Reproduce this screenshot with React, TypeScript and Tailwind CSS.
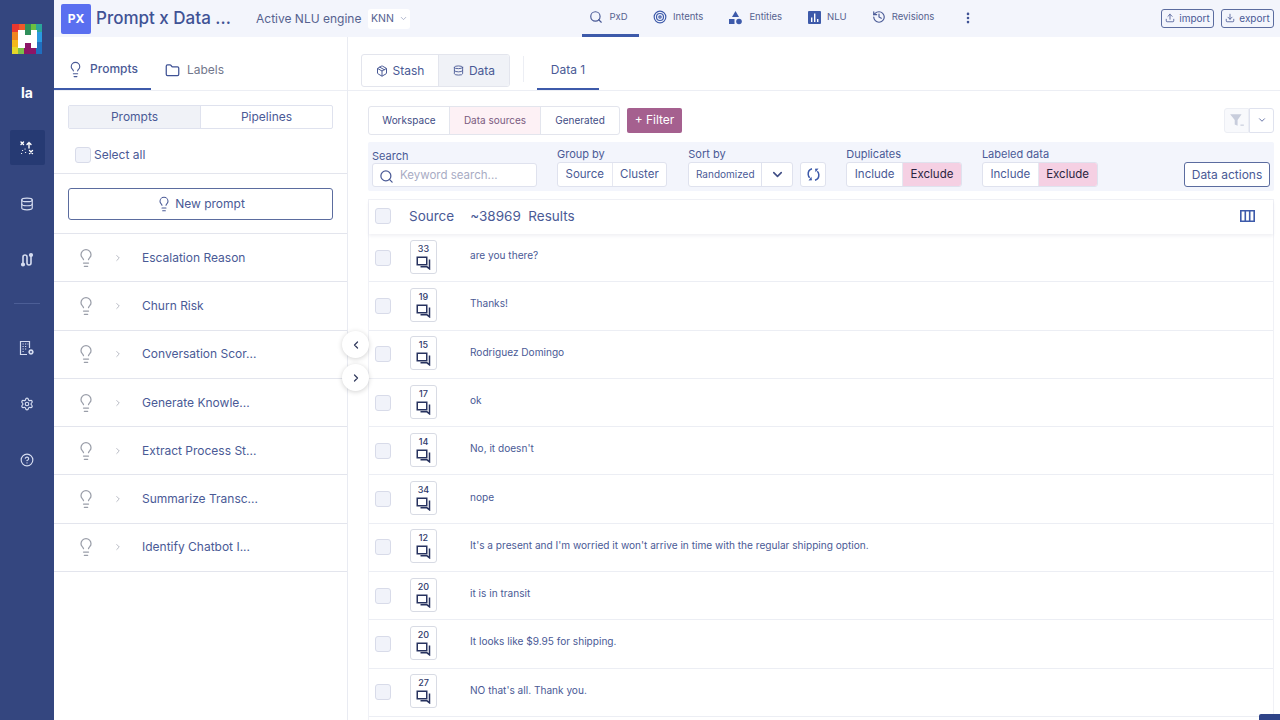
import { ChevronDown, ChevronLeft, ChevronRight, CircleHelp, Database, Download, EllipsisVertical, Folder, History, Lightbulb, Package, Search, Settings, Target, Upload } from "lucide-react"

const prompts = ["Escalation Reason", "Churn Risk", "Conversation Scor...", "Generate Knowle...", "Extract Process St...", "Summarize Transc...", "Identify Chatbot I..."]

const rows = [
  { n: 33, text: "are you there?" },
  { n: 19, text: "Thanks!" },
  { n: 15, text: "Rodriguez Domingo" },
  { n: 17, text: "ok" },
  { n: 14, text: "No, it doesn't" },
  { n: 34, text: "nope" },
  { n: 12, text: "It's a present and I'm worried it won't arrive in time with the regular shipping option." },
  { n: 20, text: "it is in transit" },
  { n: 20, text: "It looks like $9.95 for shipping." },
  { n: 27, text: "NO that's all. Thank you." },
]

function Logo() {
  return (
    <svg width="30" height="30" viewBox="0 0 30 30" shapeRendering="crispEdges">
      <rect width="30" height="30" fill="#3f9c6a" />
      <rect width="7" height="8" fill="#e8372f" />
      <rect x="7" width="6" height="6" fill="#ef5a2a" />
      <rect x="13" width="6" height="11" fill="#2f8f5a" />
      <rect x="19" width="5" height="6" fill="#6cbf3f" />
      <rect x="24" width="6" height="8" fill="#2aa59a" />
      <rect y="8" width="6" height="8" fill="#f0851f" />
      <rect y="16" width="6" height="7" fill="#f2b81c" />
      <rect y="23" width="6" height="7" fill="#e4d82a" />
      <rect x="6" y="24" width="6" height="6" fill="#7cc04a" />
      <rect x="12" y="19" width="12" height="11" fill="#8c1566" />
      <rect x="24" y="8" width="6" height="10" fill="#2a9ae0" />
      <rect x="24" y="18" width="6" height="12" fill="#1f6fc0" />
      <path d="M6 6h7v5h6V6h6v18h-6v-5h-6v5H6z" fill="#fff" />
    </svg>
  )
}

function JourneyIcon() {
  return (
    <svg width="14" height="14" viewBox="0 0 14 14" fill="none" stroke="#fff" strokeWidth="1.4" strokeLinecap="round">
      <path d="M1 1l2.500 2.500M3.500 1L1 3.500M9 1.500v5.500M7 3.500L9 1.500l2 2M9.500 9.500l3 3M12.500 9.500l-3 3" />
      <path d="M1.500 12.500h.1M2.500 9.500h.1M5 8h.1M5.500 11.500h.1" strokeWidth="1.2" />
    </svg>
  )
}

function FlowIcon() {
  return (
    <svg width="15" height="15" viewBox="0 0 15 15" fill="none" stroke="#d5dcf0" strokeWidth="1.600" strokeLinecap="round">
      <path d="M3 11V5a2 2 0 0 1 4 0v6a2 2 0 0 0 4 0V4" />
      <circle cx="11" cy="3" r="1.300" fill="#d5dcf0" />
      <circle cx="3" cy="12.500" r="1.300" fill="#d5dcf0" />
    </svg>
  )
}

function BuildingGearIcon() {
  return (
    <svg width="16" height="16" viewBox="0 0 16 16" fill="none" stroke="#d5dcf0" strokeWidth="1.200">
      <path d="M8 14.500H1.500v-13h9V8" />
      <path d="M3.500 4h1.200M6 4h1.200M8.500 4h.8M3.500 6.500h1.200M6 6.500h1.200M3.500 9h1.200M6 9h1.200M3.500 11.500h1.200" />
      <circle cx="12" cy="12" r="1.700" strokeWidth="1.500" />
      <path d="M12 9.200v1M12 13.800v1M9.200 12h1M13.800 12h1M10 10l.7.7M13.300 13.300l.7.7M14 10l-.7.7M10.700 13.300L10 14" strokeWidth="1.100" />
    </svg>
  )
}

function EntitiesIcon() {
  return (
    <svg width="15" height="15" viewBox="0 0 15 15" fill="#3d5aaa">
      <path d="M7.500 1L11 7H4z" />
      <rect x="1" y="9" width="5.500" height="5" />
      <circle cx="11" cy="11.500" r="2.800" />
    </svg>
  )
}

function NluIcon() {
  return (
    <svg width="13" height="13" viewBox="0 0 13 13">
      <rect width="13" height="13" rx="1" fill="#3d5aaa" />
      <path d="M3 6.500h1.400V11H3zM6 2.500h1.400V11H6zM9 8h1.400v3H9z" fill="#fff" />
    </svg>
  )
}

function ChatIcon() {
  return (
    <svg width="15" height="14" viewBox="0 0 15 14" fill="none" stroke="#27325f" strokeWidth="1.500">
      <path d="M1.250 1.250h9.500v7.500h-9.500z" />
      <path d="M13.500 3.500v9.300l-2.500-2H4.500" />
    </svg>
  )
}

function ColumnsIcon() {
  return (
    <svg width="15" height="12" viewBox="0 0 15 12" fill="none" stroke="#3d5aaa" strokeWidth="1.600">
      <path d="M.8.800h13.400v10.400H.8zM5.300.8v10.400M9.700.8v10.400" />
    </svg>
  )
}

function SyncIcon() {
  return (
    <svg width="15" height="15" viewBox="0 0 15 15" fill="none" stroke="#3d5aaa" strokeWidth="1.500">
      <path d="M6 1.800C3.500 2.500 2 4.800 2.200 7.500c.1 1.400.7 2.500 1.500 3.300" />
      <path d="M9 13.200c2.500-.7 4-3 3.800-5.700-.1-1.400-.7-2.500-1.500-3.300" />
      <path d="M2.500 13.500l3.500-.2-.6-3.500zM12.500 1.500L9 1.700l.6 3.500z" fill="#3d5aaa" stroke="none" />
    </svg>
  )
}

function SideIcon({ children, active }: { children: React.ReactNode; active?: boolean }) {
  return <div className={`flex h-[35px] w-[35px] items-center justify-center rounded-[2px] ${active ? "bg-[#263a73]" : ""}`}>{children}</div>
}

function Segment({ items, pink }: { items: string[]; pink: string }) {
  return (
    <div className="flex h-[25px] overflow-hidden rounded-[3px] border border-[#dfe2ee] bg-white text-[11.5px]">
      {items.map((item, i) => (
        <div key={item} className={`flex items-center px-[7.5px] ${i > 0 ? "border-l border-[#e6e8f1]" : ""} ${item === pink ? "bg-[#f5d0e3] text-[#2b2440]" : "text-[#4a5a96]"}`}>
          {item}
        </div>
      ))}
    </div>
  )
}

function Checkbox() {
  return <div className="h-[16px] w-[16px] shrink-0 rounded-[3px] border border-[#d8dbe9] bg-[#f1f3fa]" />
}

function NavItem({ icon, label, active }: { icon: React.ReactNode; label: string; active?: boolean }) {
  return (
    <div className={`flex h-[37px] items-center justify-center gap-[6px] border-b-[3px] text-[9.5px] text-[#56628f] ${active ? "w-[57px] border-[#3d5aaa] pr-[4px]" : "border-transparent"}`}>
      {icon}
      {label}
    </div>
  )
}

export default function App() {
  return (
    <div className="relative flex h-screen w-full overflow-hidden bg-white text-[#4a5a96]" style={{ fontFamily: "Inter, 'Liberation Sans', sans-serif" }}>
      {/* side rail */}
      <aside className="flex w-[54px] shrink-0 flex-col items-center bg-[#34467f] pt-[24px]">
        <Logo />
        <div className="mt-[30px] text-[14px] font-bold leading-[17px] text-white">la</div>
        <div className="mt-[29px]"><SideIcon active><JourneyIcon /></SideIcon></div>
        <div className="mt-[21px]"><SideIcon><Database size={14} color="#d5dcf0" /></SideIcon></div>
        <div className="mt-[21px]"><SideIcon><FlowIcon /></SideIcon></div>
        <div className="mt-[26px] h-px w-[26px] bg-[#4c5e96]" />
        <div className="mt-[26px]"><SideIcon><BuildingGearIcon /></SideIcon></div>
        <div className="mt-[21px]"><SideIcon><Settings size={14} color="#d5dcf0" /></SideIcon></div>
        <div className="mt-[21px]"><SideIcon><CircleHelp size={14} color="#d5dcf0" /></SideIcon></div>
      </aside>

      <div className="flex min-w-0 flex-1 flex-col">
        {/* top header */}
        <header className="relative flex h-[37px] shrink-0 items-center bg-[#f3f5fc] pl-[7px]">
          <div className="flex h-[30px] w-[30px] items-center justify-center rounded-[2px] bg-[#5a6ff0] text-[12px] font-bold text-white">PX</div>
          <div className="ml-[5px] w-[160px] text-[17px] font-medium text-[#3f5295]">Prompt x Data ...</div>
          <div className="text-[12px] text-[#56628f]">Active NLU engine</div>
          <div className="ml-[7px] flex h-[20px] w-[42px] items-center justify-center gap-[5px] rounded-[3px] bg-white text-[10.5px] text-[#56628f]">
            KNN <ChevronDown size={9} color="#98a0bd" />
          </div>
          <div className="absolute left-[528px] top-0 flex items-center">
            <NavItem active icon={<Search size={14} color="#4a5a96" />} label="PxD" />
            <div className="ml-[14px]"><NavItem icon={<Target size={14} color="#3d5aaa" />} label="Intents" /></div>
            <div className="ml-[25px]"><NavItem icon={<EntitiesIcon />} label="Entities" /></div>
            <div className="ml-[26px]"><NavItem icon={<NluIcon />} label="NLU" /></div>
            <div className="ml-[25px]"><NavItem icon={<History size={14} color="#4a5a96" />} label="Revisions" /></div>
            <EllipsisVertical className="mb-[2px] ml-[27px]" size={14} strokeWidth={2.5} color="#3f5295" />
          </div>
          <div className="mb-[1px] ml-auto mr-[6px] flex gap-[7px]">
            <div className="flex h-[19px] w-[53px] items-center justify-center gap-[4px] rounded-[3px] border border-[#5b6c9f] text-[10px] text-[#4a5a96]"><Upload size={10} />import</div>
            <div className="flex h-[19px] w-[53px] items-center justify-center gap-[4px] rounded-[3px] border border-[#5b6c9f] text-[10px] text-[#4a5a96]"><Download size={10} />export</div>
          </div>
        </header>

        <div className="flex min-h-0 flex-1">
          {/* prompts panel */}
          <section className="flex w-[294px] shrink-0 flex-col border-r border-[#e9ebf2]">
            <div className="flex h-[54px] shrink-0 border-b border-[#eceef4]">
              <div className="flex w-[97px] items-center justify-center gap-[6px] border-b-[2px] border-[#3d5aaa] pt-[13px] text-[12px] font-medium text-[#4a5a96]">
                <Lightbulb size={17} strokeWidth={1.6} />
                Prompts
              </div>
              <div className="ml-[14px] flex items-center gap-[7px] pt-[13px] text-[12px] text-[#72778c]">
                <Folder size={15} color="#3f5295" />
                Labels
              </div>
            </div>
            <div className="mx-[14px] mt-[14px] flex h-[24px] shrink-0 overflow-hidden rounded-[2px] border border-[#dfe2ee] text-[12px]">
              <div className="flex flex-1 items-center justify-center border-r border-[#dfe2ee] bg-[#f0f2f7]">Prompts</div>
              <div className="flex flex-1 items-center justify-center">Pipelines</div>
            </div>
            <div className="flex h-[45px] shrink-0 items-center gap-[3px] border-b border-[#e3e5ed] pl-[21px] pt-[7px] text-[12px]">
              <Checkbox />
              Select all
            </div>
            <div className="flex h-[60px] shrink-0 items-center border-b border-[#e3e5ed] px-[14px]">
              <div className="flex h-[32px] w-full items-center justify-center gap-[3px] rounded-[3px] border border-[#5b6c9f] text-[12px]">
                <Lightbulb size={16} strokeWidth={1.6} />
                New prompt
              </div>
            </div>
            {prompts.map((p) => (
              <div key={p} className="flex h-[48.300px] shrink-0 items-center border-b border-[#e3e5ed] pl-[21.5px] text-[12px]">
                <Lightbulb size={20} strokeWidth={1.5} color="#9a9ea9" />
                <ChevronRight className="ml-[17.5px]" size={10} color="#a9adb8" />
                <span className="ml-[19px]">{p}</span>
              </div>
            ))}
          </section>

          {/* data column */}
          <main className="flex min-w-0 flex-1 flex-col">
            <div className="flex h-[54px] shrink-0 border-b border-[#eceef4] pl-[13px]">
              <div className="mt-[17px] flex h-[33px] overflow-hidden rounded-[3px] border border-[#e3e5ed] text-[12px]">
                <div className="flex w-[77px] items-center justify-center gap-[5px] border-r border-[#e3e5ed]"><Package size={12} />Stash</div>
                <div className="flex w-[70px] items-center justify-center gap-[5px] bg-[#f0f2f7]"><Database size={11} />Data</div>
              </div>
              <div className="ml-[13px] mt-[19px] h-[26px] w-px bg-[#eceef4]" />
              <div className="ml-[13px] flex w-[62px] items-center justify-center border-b-[2px] border-[#3d5aaa] pt-[15px] text-[12px]">Data 1</div>
            </div>

            <div className="flex min-h-0 flex-1 flex-col pl-[20px] pr-[6px]">
              <div className="mt-[15px] flex h-[28px] shrink-0 items-center gap-[7px]">
                <div className="flex h-[29px] overflow-hidden rounded-[3px] border border-[#e3e5ed] text-[10px]">
                  <div className="flex w-[81px] items-center justify-center border-r border-[#e3e5ed] text-[#3f4d85]">Workspace</div>
                  <div className="flex w-[91px] items-center justify-center border-r border-[#e3e5ed] bg-[#fdf1f5] text-[#7a5a80]">Data sources</div>
                  <div className="flex w-[78px] items-center justify-center text-[#3f4d85]">Generated</div>
                </div>
                <div className="flex h-[25px] w-[55px] items-center justify-center rounded-[2px] bg-[#a5608f] text-[12px] text-white">+ Filter</div>
                <div className="ml-auto flex h-[25px]">
                  <div className="flex w-[25px] items-center justify-center rounded-l-[3px] border border-[#eceef4] bg-[#f8f9fc]">
                    <svg width="16" height="16" viewBox="0 0 14 14" fill="#c8cddc"><path d="M1 2h10L7.500 7v5l-2.500-1V7z" /><path d="M10 11h3v1h-3z" /></svg>
                  </div>
                  <div className="flex w-[25px] items-center justify-center rounded-r-[3px] border border-[#dfe2ee]"><ChevronDown size={10} /></div>
                </div>
              </div>

              {/* filter bar */}
              <div className="mt-[8px] flex h-[49px] shrink-0 items-end rounded-[2px] bg-[#f3f5fc] px-[4px] pb-[4px] text-[11px]">
                <div className="w-[165px]">
                  <div className="leading-[14px]">Search</div>
                  <div className="flex h-[24px] items-center gap-[6px] rounded-[3px] border border-[#dfe2ee] bg-white pl-[6px] pt-[2px] text-[11.5px] text-[#a8acc4]">
                    <Search size={15} color="#4a5a96" />
                    Keyword search...
                  </div>
                </div>
                <div className="ml-[20px]">
                  <div className="mb-[1px] leading-[14px]">Group by</div>
                  <Segment items={["Source", "Cluster"]} pink="" />
                </div>
                <div className="ml-[21px]">
                  <div className="mb-[1px] leading-[14px]">Sort by</div>
                  <div className="flex h-[25px] rounded-[3px] border border-[#dfe2ee] bg-white">
                    <div className="flex w-[73px] items-center justify-center border-r border-[#dfe2ee] text-[10px]">Randomized</div>
                    <div className="flex w-[30px] items-center justify-center"><ChevronDown size={15} strokeWidth={2.5} color="#3f4d85" /></div>
                  </div>
                </div>
                <div className="ml-[7px] flex h-[25px] w-[26px] items-center justify-center rounded-[3px] border border-[#dfe2ee] bg-white"><SyncIcon /></div>
                <div className="ml-[20px]">
                  <div className="mb-[1px] leading-[14px]">Duplicates</div>
                  <Segment items={["Include", "Exclude"]} pink="Exclude" />
                </div>
                <div className="ml-[20px]">
                  <div className="mb-[1px] leading-[14px]">Labeled data</div>
                  <Segment items={["Include", "Exclude"]} pink="Exclude" />
                </div>
                <div className="ml-auto flex h-[25px] w-[86px] items-center justify-center rounded-[3px] border border-[#5b6c9f] bg-white text-[12px]">Data actions</div>
              </div>

              {/* results */}
              <div className="mt-[8px] flex min-h-0 flex-1 flex-col border-x border-t border-[#f0f1f6]">
                <div className="flex h-[34px] shrink-0 items-center pb-[2px] pl-[6px] pr-[18px] text-[13.5px] shadow-[0_2px_3px_rgba(60,70,110,0.08)]">
                  <Checkbox />
                  <span className="ml-[18px]">Source</span>
                  <span className="ml-[16px]">~38969&nbsp; Results</span>
                  <span className="ml-auto"><ColumnsIcon /></span>
                </div>
                {rows.map((r, i) => (
                  <div key={i} className="flex h-[48.300px] shrink-0 items-center border-b border-[#eceef4] pl-[6px] text-[10.1px]">
                    <Checkbox />
                    <div className="mb-[2px] ml-[19px] flex h-[34px] w-[27px] shrink-0 flex-col items-center gap-[1px] rounded-[3px] border-[1.5px] border-[#d8dbe4] pt-[2px] text-[#2f3a6b]">
                      <span className="text-[9px] font-medium leading-[12px]">{r.n}</span>
                      <ChatIcon />
                    </div>
                    <span className="mb-[4px] ml-[33px]">{r.text}</span>
                  </div>
                ))}
              </div>
            </div>
          </main>
        </div>
      </div>

      {/* panel collapse buttons */}
      <div className="absolute left-[342px] top-[331px] flex h-[27px] w-[27px] items-center justify-center rounded-full bg-white shadow-[0_1px_5px_rgba(0,0,0,0.18)]"><ChevronLeft size={12} strokeWidth={2.5} color="#333c5f" /></div>
      <div className="absolute left-[342px] top-[364px] flex h-[27px] w-[27px] items-center justify-center rounded-full bg-white shadow-[0_1px_5px_rgba(0,0,0,0.18)]"><ChevronRight size={12} strokeWidth={2.5} color="#333c5f" /></div>
      <div className="absolute bottom-0 right-0 h-[6px] w-[21px] rounded-tl-[2px] bg-[#2f4488]" />
    </div>
  )
}
